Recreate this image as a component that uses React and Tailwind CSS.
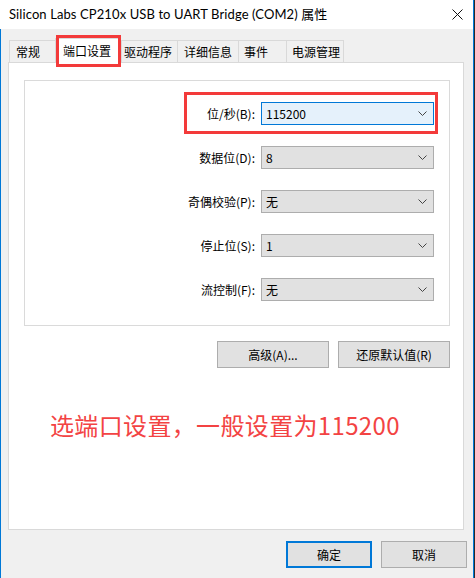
import React from 'react'

const FONT = { fontFamily: '"Noto Sans CJK SC", "Noto Sans", sans-serif' }

const tabs = [
  { label: '常规', w: 'w-[46px]', pl: 'pl-[6px]' },
  { label: '端口设置', w: 'w-[66px]', pl: 'pl-[7px]', active: true },
  { label: '驱动程序', w: 'w-[56px]', pl: 'pl-[2px]' },
  { label: '详细信息', w: 'w-[61px]', pl: 'pl-[6px]' },
  { label: '事件', w: 'w-[48px]', pl: 'pl-[5px]' },
  { label: '电源管理', w: 'w-[58px]', pl: 'pl-[5px]', last: true },
]

const rows = [
  { label: '位/秒(B):', value: '115200', focus: true },
  { label: '数据位(D):', value: '8' },
  { label: '奇偶校验(P):', value: '无' },
  { label: '停止位(S):', value: '1' },
  { label: '流控制(F):', value: '无' },
]

function Chevron() {
  return (
    <svg width="9" height="6" viewBox="0 0 9 6" className="flex-shrink-0">
      <polyline points="0.5,0.5 4.5,4.5 8.5,0.5" fill="none" stroke="#444" strokeWidth="1" />
    </svg>
  )
}

function Select({ value, focus }) {
  return (
    <div
      className={`w-[173px] h-[23px] flex items-center justify-between pl-[4px] pr-[6px] border text-[12px] text-black ${
        focus ? 'bg-[#e5f1fb] border-[#0078d7]' : 'bg-[#e1e1e1] border-[#adadad]'
      }`}
    >
      <span>{value}</span>
      <Chevron />
    </div>
  )
}

export default function App() {
  return (
    <div className="w-[475px] h-[578px] flex bg-[#f0f0f0] overflow-hidden text-black" style={FONT}>
      <div className="flex-1 flex flex-col">
        {/* Title bar */}
        <div className="h-[29px] bg-white flex items-center justify-between pl-[9px] pr-[10px]">
          <span
            className="text-[13px] tracking-[0.1px]"
            style={{ fontFamily: 'Lato, "Noto Sans CJK SC", sans-serif' }}
          >
            Silicon Labs CP210x USB to UART Bridge (COM2) 属性
          </span>
          <svg width="11" height="11" viewBox="0 0 11 11">
            <path d="M0.5 0.5 L10.5 10.5 M10.5 0.5 L0.5 10.5" stroke="#111" strokeWidth="1" />
          </svg>
        </div>

        {/* Body */}
        <div className="flex-1 border-l border-[#0078d7] pl-[7px] pt-[9px]">
          {/* Tabs */}
          <div className="relative flex items-end h-[24px] pl-px">
            {tabs.map((t) =>
              t.active ? (
                <div
                  key={t.label}
                  className={`${t.w} ${t.pl} h-[25px] -mb-px z-10 bg-white border border-b-0 border-[#d9d9d9] flex items-center text-[12px]`}
                >
                  {t.label}
                </div>
              ) : (
                <div
                  key={t.label}
                  className={`${t.w} ${t.pl} h-[22px] bg-[#f0f0f0] border-t border-l border-[#d9d9d9] ${
                    t.last ? 'border-r' : ''
                  } flex items-center text-[12px]`}
                >
                  {t.label}
                </div>
              )
            )}
            {/* annotation around the active tab */}
            <div className="absolute left-[48px] top-[-3px] w-[65px] h-[32px] border-[3px] border-[#f33a3a] z-20" />
          </div>

          {/* Tab page */}
          <div className="w-[456px] h-[468px] bg-white border border-[#d9d9d9] pl-[15px] pt-[17px]">
            <div className="relative w-[426px] h-[246px] border border-[#dadada] pt-[21px] pr-[15px] flex flex-col gap-[21px]">
              {rows.map((r) => (
                <div key={r.label} className="flex items-center justify-end gap-[6px]">
                  <span className="text-[12px]">{r.label}</span>
                  <Select value={r.value} focus={r.focus} />
                </div>
              ))}
              {/* annotation around the baud rate row */}
              <div className="absolute left-[159px] top-[11px] w-[254px] h-[42px] border-[3px] border-[#f33a3a]" />
            </div>

            <div className="w-[426px] flex justify-end gap-[9px] mt-[15px]">
              <button className="w-[112px] h-[27px] bg-[#e1e1e1] border border-[#adadad] text-[12px]">高级(A)...</button>
              <button className="w-[112px] h-[27px] bg-[#e1e1e1] border border-[#adadad] text-[12px]">还原默认值(R)</button>
            </div>

            <div className="mt-[41px] pl-[26px] text-[24px] leading-[32px] tracking-[0.35px] text-[#f34343]">
              选端口设置，一般设置为115200
            </div>
          </div>

          {/* Dialog buttons */}
          <div className="flex justify-end gap-[9px] mt-[11px] pr-[6px]">
            <button className="w-[86px] h-[27px] bg-[#e1e1e1] border-2 border-[#0078d7] text-[12px]">确定</button>
            <button className="w-[86px] h-[27px] bg-[#e1e1e1] border border-[#adadad] text-[12px]">取消</button>
          </div>
        </div>
      </div>
      <div className="w-px bg-[#0078d7]" />
      <div className="w-px bg-[#2a2a2a]" />
    </div>
  )
}
